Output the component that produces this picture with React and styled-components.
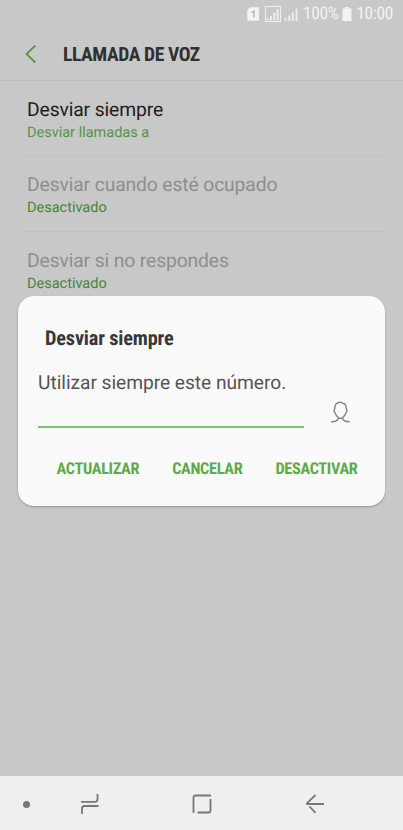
import React, { useState } from 'react';
import styled, { createGlobalStyle } from 'styled-components';

const GlobalStyle = createGlobalStyle`
  * {
    box-sizing: border-box;
  }

  body {
    margin: 0;
    background: #c8c8c8;
    font-family: Roboto, sans-serif;
    text-rendering: geometricPrecision;
  }

  button {
    padding: 0;
    border: none;
    background: none;
    cursor: pointer;
    text-rendering: inherit;
  }
`;

const Screen = styled.div`
  position: relative;
  display: flex;
  flex-direction: column;
  width: 403px;
  height: 830px;
  overflow: hidden;
  background: #c8c8c8;
`;

const Condensed = styled.span`
  display: block;
  font-family: 'Roboto Condensed', Roboto, sans-serif;
  font-stretch: 75%;
  font-weight: ${props => props.$weight || 700};
  white-space: nowrap;
`;

const StatusBar = styled.div`
  display: flex;
  align-items: center;
  height: 28px;
  padding-left: 246px;
  color: #f3f3f3;
`;

const StatusText = styled(Condensed)`
  font-size: 17.4px;
  line-height: 28px;
  letter-spacing: -0.35px;
  margin-left: ${props => props.$gap}px;
`;

const BatteryIcon = styled.svg`
  flex: none;
  margin-left: 4px;
`;

const AppBar = styled.header`
  display: flex;
  align-items: center;
  height: 53px;
  padding-left: 24px;
  border-bottom: 1px solid #bfbfbf;
`;

const BackButton = styled.button`
  display: flex;
  width: 39px;
`;

const PageTitle = styled(Condensed)`
  padding-top: 1px;
  font-size: 19.6px;
  line-height: 24px;
  letter-spacing: -0.43px;
  color: #303030;
`;

const SettingsList = styled.main`
  flex: 1;
  padding: 0 18px 0 20px;
`;

const SettingItem = styled.div`
  height: 75.6px;
  padding: 16.5px 7px 0;
  border-bottom: 1px solid #c1c1c1;
`;

const SettingName = styled.div`
  font-size: 19.3px;
  line-height: 24px;
  letter-spacing: -0.12px;
  color: ${props => (props.$disabled ? '#8e8e8e' : '#202020')};
`;

const SettingValue = styled.div`
  font-size: 14.5px;
  line-height: 18px;
  margin-top: 2px;
  color: ${props => (props.$muted ? '#4b843b' : '#579345')};
`;

const Dialog = styled.section`
  position: absolute;
  left: 18px;
  top: 296px;
  width: 367px;
  height: 210px;
  padding-top: 30px;
  border-radius: 16px;
  background: #fafafa;
  box-shadow: 0 1px 2px rgba(0, 0, 0, 0.28);
`;

const DialogTitle = styled(Condensed)`
  margin-left: 27px;
  font-size: 20.3px;
  line-height: 24px;
  letter-spacing: -0.16px;
  color: #383838;
`;

const DialogMessage = styled.div`
  margin: 20px 0 0 20px;
  font-size: 19.2px;
  line-height: 25px;
  letter-spacing: -0.04px;
  color: #555;
`;

const InputRow = styled.div`
  display: flex;
  height: 33px;
  padding-left: 20px;
`;

const NumberInput = styled.input`
  width: 266px;
  height: 33px;
  padding: 0;
  border: none;
  border-bottom: 2px solid #80c270;
  outline: none;
  background: transparent;
  font: 18px Roboto, sans-serif;
`;

const ContactButton = styled.button`
  display: flex;
  align-items: flex-start;
  margin-left: 26px;
  padding-top: 5px;
`;

const DialogActions = styled.div`
  display: flex;
  align-items: center;
  gap: 33px;
  height: 24px;
  margin-top: 29px;
  padding-left: 38.5px;
`;

const ActionLabel = styled(Condensed)`
  padding-top: 0.5px;
  font-size: 16.3px;
  line-height: 24px;
  letter-spacing: -0.33px;
  color: #5cab49;
`;

const NavigationBar = styled.nav`
  display: flex;
  align-items: center;
  height: 54px;
  padding-left: 23px;
  background: #efefef;
`;

const NavDot = styled.span`
  width: 7px;
  height: 7px;
  margin-top: 2px;
  border-radius: 50%;
  background: #777;
`;

const NavButton = styled.button`
  display: flex;
  margin-top: 2px;
  margin-left: ${props => props.$gap}px;
`;

const settings = [
  { name: 'Desviar siempre', value: 'Desviar llamadas a' },
  { name: 'Desviar cuando esté ocupado', value: 'Desactivado', disabled: true },
  { name: 'Desviar si no respondes', value: 'Desactivado', disabled: true }
];

const actions = ['ACTUALIZAR', 'CANCELAR', 'DESACTIVAR'];

function StatusIcons() {
  return (
    <svg width="52" height="18" viewBox="0 0 52 18" fill="none">
      <path d="M4 2.3h9v13.4H1.3V5z" fill="#f3f3f3" />
      <path d="M5.5 7.6L7.9 6.4V12.5" stroke="#b8b8b8" strokeWidth="1.6" />
      <rect x="19.5" y="1.5" width="15" height="15" stroke="#eee" strokeWidth="1.1" />
      <path d="M21.8 15.2v-2M25 15.2v-4.5M28.2 15.2v-7.5M31.5 15.2v-11" stroke="#eee" strokeWidth="1.9" />
      <path d="M39.5 16v-3M43.2 16v-5.5M46.8 16v-8.5M50.5 16v-12.5" stroke="#eee" strokeWidth="1.8" />
    </svg>
  );
}

export default function App() {
  const [number, setNumber] = useState('');

  return (
    <>
      <GlobalStyle />
      <Screen>
        <StatusBar>
          <StatusIcons />
          <StatusText $weight={400} $gap={5}>100%</StatusText>
          <BatteryIcon width="10" height="14" viewBox="0 0 10 14">
            <path d="M3 0h4v1.5h2.5V14h-9V1.5H3z" fill="#f3f3f3" />
          </BatteryIcon>
          <StatusText $weight={400} $gap={4}>10:00</StatusText>
        </StatusBar>

        <AppBar>
          <BackButton aria-label="Atrás">
            <svg width="14" height="20" viewBox="0 0 14 20" fill="none">
              <path d="M11.3 1.7L2.5 10l8.8 8.5" stroke="#569443" strokeWidth="1.8" />
            </svg>
          </BackButton>
          <PageTitle>LLAMADA DE VOZ</PageTitle>
        </AppBar>

        <SettingsList>
          {settings.map(item => (
            <SettingItem key={item.name}>
              <SettingName $disabled={item.disabled}>{item.name}</SettingName>
              <SettingValue $muted={item.disabled}>{item.value}</SettingValue>
            </SettingItem>
          ))}
        </SettingsList>

        <NavigationBar>
          <NavDot />
          <NavButton $gap={50} aria-label="Recientes">
            <svg width="20" height="22" viewBox="0 0 20 22" fill="none" stroke="#777" strokeWidth="1.8">
              <path d="M1 8.8h14q2.5 0 2.5-2.5V1M18.5 13H4.5Q2 13 2 15.5V21" />
            </svg>
          </NavButton>
          <NavButton $gap={92} aria-label="Inicio">
            <svg width="20" height="20" viewBox="0 0 20 20" fill="none" stroke="#777" strokeWidth="1.8">
              <path d="M1.5 19V3.5Q1.5 1.5 3.5 1.5H19M18.5 5v11.5q0 2-2 2H5.5" />
            </svg>
          </NavButton>
          <NavButton $gap={94} aria-label="Volver">
            <svg width="20" height="20" viewBox="0 0 20 20" fill="none" stroke="#777" strokeWidth="1.8">
              <path d="M9.5 1L1 9.2q-.4.8.5.8H18M3.5 12.5l6 6.3" />
            </svg>
          </NavButton>
        </NavigationBar>

        <Dialog role="dialog">
          <DialogTitle>Desviar siempre</DialogTitle>
          <DialogMessage>Utilizar siempre este número.</DialogMessage>
          <InputRow>
            <NumberInput
              type="tel"
              value={number}
              onChange={(e) => setNumber(e.target.value)}
            />
            <ContactButton aria-label="Contactos">
              <svg width="22" height="24" viewBox="0 0 22 24" fill="none" stroke="#858585" strokeWidth="1.4">
                <path d="M10.5 2.2C6.6 2.1 4.5 5 4.7 9c-1.1 1.2-.7 3.2.4 4 .7 2.2 2 3.8 3.6 4.8q1.8 1 3.6 0c1.6-1 2.9-2.6 3.6-4.8 1.1-.8 1.5-2.8.4-4 .2-3.5-1-5.5-3.5-5.8-.6-.6-1.3-1-2.3-1zM8.6 17.4C8.3 20.4 5.2 21.9 1.2 21.8M12.4 17.4c.3 3 3.4 4.5 7.4 4.4" />
              </svg>
            </ContactButton>
          </InputRow>
          <DialogActions>
            {actions.map(label => (
              <button key={label}>
                <ActionLabel>{label}</ActionLabel>
              </button>
            ))}
          </DialogActions>
        </Dialog>
      </Screen>
    </>
  );
}
